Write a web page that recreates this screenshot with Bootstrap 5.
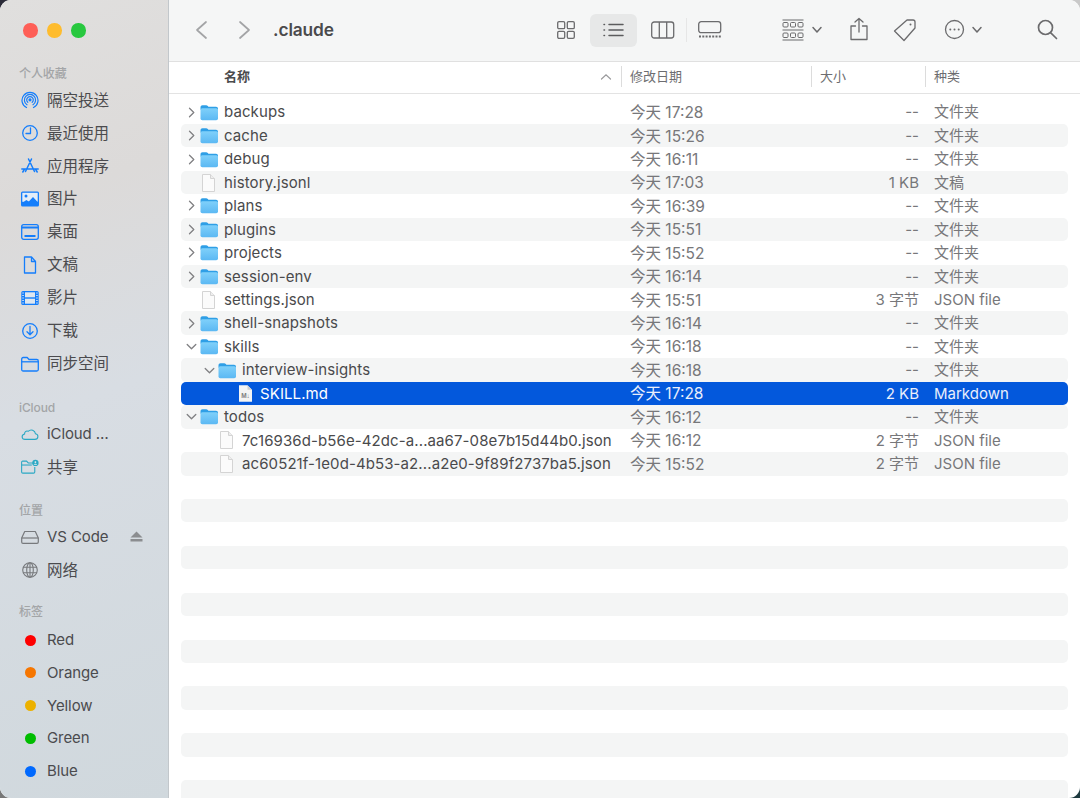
<!doctype html>
<html lang="zh"><head><meta charset="utf-8"><title>.claude</title>
<link rel="stylesheet" href="https://cdn.jsdelivr.net/npm/bootstrap@5.3.0/dist/css/bootstrap.min.css">
<style>
html,body{height:798px;overflow:hidden}
body{background:conic-gradient(#c9c9c9 0 25%,#1e3a40 0 50%,#777 0 75%,#2b2b38 0);font-family:Inter,"Noto Sans CJK SC",sans-serif;color:#3b3b3d;font-size:15px;letter-spacing:-.1px}
.win{width:1080px;height:798px;border-radius:11px;overflow:hidden;background:#fff}
.side{width:169px;height:798px;flex:none;background:linear-gradient(160deg,#e0dfde 0%,#dcdad9 25%,#d8dde3 50%,#d0d8dd 100%);border-right:1px solid #c2c7cb;padding-top:23px}
.lights{padding-left:23px;gap:9.5px;height:15px;margin-bottom:28px}
.lt{width:14.5px;height:14.5px;border-radius:50%}
.sec{font-size:12px;line-height:16px;font-weight:500;color:#a3a5a7;padding-left:19px;height:18px}
.sit{height:32.9px;padding-left:21px;gap:8px;color:#4b4b4e;white-space:nowrap}
.sit svg{width:18px;height:18px;flex:none}
.cj{font-size:15.5px;letter-spacing:0}
.tdot{width:11px;height:11px;border-radius:50%;margin:0 3px 0 4px;flex:none}
.s2{margin-top:20px}.s3{margin-top:19px}.s4{margin-top:17.500px;margin-bottom:1.500px}
.main{flex:1;min-width:0}
.tb{height:62px;background:#f5f6f6;border-bottom:1px solid #e0e0e0;position:relative}
.tic{position:absolute;top:0}
.ttl{position:absolute;left:104px;top:18px;font-size:17.3px;line-height:24px;font-weight:600;color:#4a4a4c;letter-spacing:-.1px}
.tsel{position:absolute;left:421px;top:14px;width:47px;height:33px;border-radius:6px;background:#e7e8e8}
.hd{height:32px;border-bottom:1px solid #e3e3e3;font-size:13px;letter-spacing:0;color:#6d6d70;position:relative}
.hc{position:absolute;top:0;line-height:28px}
.hs{position:absolute;top:4px;height:21px;width:1px;background:#dcdcdc}
.lst{padding:6.5px 12px 0 12px}
.rw{height:23.45px;border-radius:5px;font-size:15px;color:#4a4a4c;white-space:nowrap}
.rw:nth-child(even){background:#f4f5f5}
.rw.on{background:#0358dc;color:#fff}
.rw.on .dt,.rw.on .sz,.rw.on .kd{color:#e9eefb}
.nm{width:440px;flex:none;display:flex;align-items:center;padding-left:4px}
.l1{padding-left:22px}.l2{padding-left:55px}.l3{padding-left:27px}
.chev{width:13px;height:13px;flex:none;margin-right:2px}
.fo{width:19px;height:17px;flex:none;margin-right:5px}
.dc{width:17px;height:18px;flex:none;margin:0 7px 0 15px}
.l3 .dc{margin-left:10px}
.fn{display:block;letter-spacing:.1px;padding-top:1px}
.dt{width:190px;flex:none;padding:1px 0 0 9px;color:#77777a;font-size:15.5px;letter-spacing:0}
.sz{width:108px;flex:none;padding-top:1px;text-align:right;color:#77777a;font-size:15px;letter-spacing:0}
.kd{padding:1px 0 0 15px;color:#77777a;font-size:15px;letter-spacing:0}
</style></head><body>
<svg width="0" height="0" class="position-absolute">
<defs>
<linearGradient id="fg" x1="0" y1="0" x2="0" y2="1"><stop offset="0" stop-color="#7fd0fa"/><stop offset="1" stop-color="#5bb8f3"/></linearGradient>
<symbol id="folder" viewBox="0 0 19 17"><path d="M.5 3.200C.5 2 1.300 1.200 2.500 1.200h3.600c.8 0 1.200.3 1.700.9l.6.7H16c1.200 0 2 .8 2 2v1H.5z" fill="#2f9fe6"/><rect x=".5" y="4.300" width="17.500" height="12" rx="1.800" fill="url(#fg)"/></symbol>
<symbol id="doc" viewBox="0 0 17 18"><path d="M2.500 .5h8l4 4v13h-12z" fill="#fbfbfb" stroke="#d4d4d4"/><path d="M10.500 .5v4h4" fill="#eee" stroke="#d4d4d4"/></symbol>
<symbol id="cr" viewBox="0 0 13 13"><path d="M4.500 2.200L8.800 6.500 4.500 10.800" fill="none" stroke="#808083" stroke-width="1.300" stroke-linecap="round" stroke-linejoin="round"/></symbol>
<symbol id="cd" viewBox="0 0 13 13"><path d="M2.200 4.500l4.300 4.300 4.300-4.300" fill="none" stroke="#808083" stroke-width="1.300" stroke-linecap="round" stroke-linejoin="round"/></symbol>
<symbol id="mdoc" viewBox="0 0 19 17"><path d="M3 .3h8.500L16 4.800v12H3z" fill="#f4f4f4"/><path d="M11.500 .3v4.500H16" fill="#cfcfcf"/><text x="9.500" y="12.800" font-size="6.500" font-weight="700" text-anchor="middle" fill="#7f7f7f" font-family="Liberation Sans">M↓</text></symbol>
</defs></svg>
<div class="win d-flex">
<aside class="side">
<div class="lights d-flex"><div class="lt" style="background:#fe5f57"></div><div class="lt" style="background:#febc2e"></div><div class="lt" style="background:#28c83f"></div></div>
<div class="sec">个人收藏</div>
<div class="sit d-flex align-items-center"><svg viewBox="0 0 18 18" fill="none" stroke="#157efb" stroke-width="1.200" stroke-linecap="round"><path d="M5.500 16.500A8 8 0 1 1 12.500 16.500"/><path d="M6 13.800A5.600 5.600 0 1 1 12 13.800"/><path d="M6.800 11.300A3.300 3.300 0 1 1 11.200 11.300"/><circle cx="9" cy="8.800" r="1" fill="#157efb"/></svg><span class="cj">隔空投送</span></div>
<div class="sit d-flex align-items-center"><svg viewBox="0 0 18 18" fill="none" stroke="#157efb" stroke-width="1.300" stroke-linecap="round" stroke-linejoin="round"><circle cx="9" cy="9" r="7.300"/><path d="M9.500 4v5.500H5"/></svg><span class="cj">最近使用</span></div>
<div class="sit d-flex align-items-center"><svg viewBox="0 0 18 18" fill="none" stroke="#157efb" stroke-width="1.500" stroke-linecap="round"><path d="M10.500 2L4.500 14.500M7.500 2l6 12.500M.8 12h16.400M1.800 15l1.500-2.500M16.200 15l-1.500-2.500"/></svg><span class="cj">应用程序</span></div>
<div class="sit d-flex align-items-center"><svg viewBox="0 0 18 18"><rect x="0" y="1.500" width="18" height="15" rx="1.500" fill="#157efb"/><rect x="1.300" y="2.800" width="15.400" height="9" fill="#e3edf8"/><circle cx="5" cy="6" r="1.500" fill="#157efb"/><path d="M1.300 13l4-3 2.500 1.500L12 7l4.700 5v2H1.300z" fill="#157efb"/></svg><span class="cj">图片</span></div>
<div class="sit d-flex align-items-center"><svg viewBox="0 0 18 18" fill="none" stroke="#157efb" stroke-width="1.300"><rect x=".7" y="1.700" width="16.600" height="14.600" rx="2"/><path d="M.7 4.500h16.600" stroke-width="2"/><path d="M3.500 13h11" stroke-width="2"/></svg><span class="cj">桌面</span></div>
<div class="sit d-flex align-items-center"><svg viewBox="0 0 18 18" fill="none" stroke="#157efb" stroke-width="1.300" stroke-linejoin="round"><path d="M3.500 1h7l4 4.500V17h-11z"/><path d="M10.500 1v4.500h4"/></svg><span class="cj">文稿</span></div>
<div class="sit d-flex align-items-center"><svg viewBox="0 0 18 18"><rect x=".3" y="2" width="17.400" height="14" rx="1.500" fill="#157efb"/><rect x="4" y="3.300" width="10" height="5" fill="#dfe7ef"/><rect x="4" y="9.700" width="10" height="5" fill="#dfe7ef"/><path d="M1.300 4h1.500M1.300 6.500h1.500M1.300 9h1.500M1.300 11.500h1.500M1.300 14h1.500M15.200 4h1.500M15.200 6.500h1.500M15.200 9h1.500M15.200 11.500h1.500M15.200 14h1.500" stroke="#dfe7ef" stroke-width="1.200"/></svg><span class="cj">影片</span></div>
<div class="sit d-flex align-items-center"><svg viewBox="0 0 18 18" fill="none" stroke="#157efb" stroke-width="1.300" stroke-linecap="round" stroke-linejoin="round"><circle cx="9" cy="9" r="7.300"/><path d="M9 4.500v8M6 9.800l3 3 3-3"/></svg><span class="cj">下载</span></div>
<div class="sit d-flex align-items-center"><svg viewBox="0 0 18 18" fill="none" stroke="#157efb" stroke-width="1.300" stroke-linejoin="round"><path d="M.7 4c0-1 .6-1.500 1.500-1.500h4l1.800 2h7.800c1 0 1.500.6 1.500 1.500v8.500c0 1-.6 1.500-1.500 1.500H2.200c-1 0-1.500-.6-1.500-1.500z"/><path d="M.7 6.800h16.600"/></svg><span class="cj">同步空间</span></div>
<div class="sec s2">iCloud</div>
<div class="sit d-flex align-items-center"><svg viewBox="0 0 20 18" fill="none" stroke="#2aa8c4" stroke-width="1.200" stroke-linejoin="round"><path d="M4.500 15h11c4 0 4.500-5.500.6-6.200C15.600 5 11 3 8 6 5.500 5 3.800 7 4 9 0 10 .5 15 4.500 15z"/></svg><span>iCloud …</span></div>
<div class="sit d-flex align-items-center"><svg viewBox="0 0 20 18" fill="none" stroke="#2aa8c4" stroke-width="1.200" stroke-linejoin="round"><path d="M14 4.500H8l-1.800-2H2C1 2.500.7 3 .7 4v10.500c0 .8.500 1.300 1.300 1.300h12c.8 0 1.300-.5 1.300-1.300V9"/><path d="M.7 6.800H12"/><circle cx="16" cy="4.500" r="3.500" fill="#2aa8c4" stroke="none"/><circle cx="16" cy="3.500" r="1" fill="#e6ecef" stroke="none"/><path d="M14.200 6.500c.4-1.400 3.200-1.400 3.600 0z" fill="#e6ecef" stroke="none"/></svg><span class="cj">共享</span></div>
<div class="sec s3">位置</div>
<div class="sit d-flex align-items-center position-relative"><svg viewBox="0 0 18 18" fill="none" stroke="#77797c" stroke-width="1.200" stroke-linejoin="round"><path d="M.7 10l3-6.500h10.600l3 6.500v4c0 .8-.5 1.300-1.300 1.300H2c-.8 0-1.300-.5-1.300-1.300z"/><path d="M.7 10h16.600"/></svg><span>VS Code</span><svg class="position-absolute" style="left:130px;top:9px;width:13px;height:13px" viewBox="0 0 13 13"><path d="M6.500 1.500l6 6H.5z" fill="#8b8d90"/><rect x=".5" y="9" width="12" height="2.500" fill="#8b8d90"/></svg></div>
<div class="sit d-flex align-items-center"><svg viewBox="0 0 18 18" fill="none" stroke="#77797c" stroke-width="1.100"><circle cx="9" cy="9" r="7.300"/><ellipse cx="9" cy="9" rx="3.300" ry="7.300"/><path d="M2 6.300h14M2 11.700h14M9 1.700v14.600"/></svg><span class="cj">网络</span></div>
<div class="sec s4">标签</div>
<div class="sit d-flex align-items-center"><div class="tdot" style="background:#fe0000"></div><span>Red</span></div>
<div class="sit d-flex align-items-center"><div class="tdot" style="background:#f67600"></div><span>Orange</span></div>
<div class="sit d-flex align-items-center"><div class="tdot" style="background:#ecb100"></div><span>Yellow</span></div>
<div class="sit d-flex align-items-center"><div class="tdot" style="background:#00bd00"></div><span>Green</span></div>
<div class="sit d-flex align-items-center"><div class="tdot" style="background:#0069fe"></div><span>Blue</span></div>
</aside>
<main class="main">
<div class="tb">
<svg class="tic" style="left:24px;top:20px" width="18" height="20" viewBox="0 0 18 20"><path d="M13 2L4 10l9 8" fill="none" stroke="#a3a4a6" stroke-width="1.700" stroke-linecap="round" stroke-linejoin="round"/></svg>
<svg class="tic" style="left:66px;top:20px" width="18" height="20" viewBox="0 0 18 20"><path d="M5 2l9 8-9 8" fill="none" stroke="#a3a4a6" stroke-width="1.700" stroke-linecap="round" stroke-linejoin="round"/></svg>
<div class="ttl">.claude</div>
<svg class="tic" style="left:388px;top:21px" width="18" height="18" viewBox="0 0 18 18" fill="none" stroke="#6b6b6d" stroke-width="1.300"><rect x=".7" y=".7" width="7" height="7" rx="1.300"/><rect x="10.300" y=".7" width="7" height="7" rx="1.300"/><rect x=".7" y="10.300" width="7" height="7" rx="1.300"/><rect x="10.300" y="10.300" width="7" height="7" rx="1.300"/></svg>
<div class="tsel"></div>
<svg class="tic" style="left:434px;top:22px" width="21" height="16" viewBox="0 0 21 16" fill="none" stroke="#5b5b5d" stroke-width="1.500" stroke-linecap="round"><path d="M6 2.500h14M6 8h14M6 13.500h14M1 2.500h.5M1 8h.5M1 13.500h.5"/></svg>
<svg class="tic" style="left:482px;top:21px" width="24" height="18" viewBox="0 0 24 18" fill="none" stroke="#6b6b6d" stroke-width="1.300"><rect x=".7" y="1" width="22" height="16" rx="2.500"/><path d="M8.300 1v16M15.700 1v16"/></svg>
<div class="position-absolute" style="left:517px;top:18px;width:1px;height:24px;background:#e6e6e6"></div>
<svg class="tic" style="left:529px;top:21px" width="24" height="18" viewBox="0 0 24 18" fill="none" stroke="#6b6b6d" stroke-width="1.300"><rect x=".7" y=".7" width="22" height="11" rx="2.500"/><path d="M1 15.500h22" stroke-width="2" stroke-dasharray="2 1.300"/></svg>
<svg class="tic" style="left:613px;top:19px" width="22" height="22" viewBox="0 0 22 22" fill="none" stroke="#6b6b6d"><path d="M.5 1h21M.5 21h21M.5 11h21" stroke-width="1.200"/><rect x="1" y="3.500" width="5" height="4.500" rx="1"/><rect x="8.500" y="3.500" width="5" height="4.500" rx="1"/><rect x="16" y="3.500" width="5" height="4.500" rx="1"/><rect x="1" y="14" width="5" height="4.500" rx="1"/><rect x="8.500" y="14" width="5" height="4.500" rx="1"/><rect x="16" y="14" width="5" height="4.500" rx="1"/></svg>
<svg class="tic" style="left:642px;top:25px" width="12" height="10" viewBox="0 0 12 10"><path d="M2 2.500L6 7l4-4.500" fill="none" stroke="#6b6b6d" stroke-width="1.500" stroke-linecap="round" stroke-linejoin="round"/></svg>
<svg class="tic" style="left:681px;top:17px" width="18" height="24" viewBox="0 0 18 24" fill="none" stroke="#6b6b6d" stroke-width="1.300" stroke-linecap="round" stroke-linejoin="round"><path d="M5.500 9H1v13.500h16V9h-4.500M9 15V1.500M5 5l4-3.500L13 5"/></svg>
<svg class="tic" style="left:724px;top:18px" width="24" height="24" viewBox="0 0 24 24" fill="none" stroke="#6b6b6d" stroke-width="1.300" stroke-linejoin="round"><path d="M14 2h6c1.200 0 2 .8 2 2v6L11 22.500 1.500 13z"/><circle cx="17.500" cy="6.500" r="1" fill="#6b6b6d" stroke="none"/></svg>
<svg class="tic" style="left:775px;top:19px" width="21" height="21" viewBox="0 0 21 21" fill="none" stroke="#6b6b6d" stroke-width="1.300"><circle cx="10.500" cy="10.500" r="9"/><circle cx="6.300" cy="10.500" r="1" fill="#6b6b6d" stroke="none"/><circle cx="10.500" cy="10.500" r="1" fill="#6b6b6d" stroke="none"/><circle cx="14.700" cy="10.500" r="1" fill="#6b6b6d" stroke="none"/></svg>
<svg class="tic" style="left:802px;top:25px" width="12" height="10" viewBox="0 0 12 10"><path d="M2 2.500L6 7l4-4.500" fill="none" stroke="#6b6b6d" stroke-width="1.500" stroke-linecap="round" stroke-linejoin="round"/></svg>
<svg class="tic" style="left:868px;top:19px" width="21" height="21" viewBox="0 0 21 21" fill="none" stroke="#6b6b6d" stroke-width="1.700" stroke-linecap="round"><circle cx="8.500" cy="8.500" r="7"/><path d="M13.800 13.800l5.700 5.700"/></svg>
</div>
<div class="hd">
<div class="hc fw-semibold" style="left:55px;color:#4a4a4c">名称</div>
<svg class="tic" style="left:431px;top:11px" width="12" height="8" viewBox="0 0 12 8"><path d="M1.500 6L6 1.800 10.500 6" fill="none" stroke="#9a9a9c" stroke-width="1.200" stroke-linecap="round"/></svg>
<div class="hs" style="left:452px"></div>
<div class="hc" style="left:461px">修改日期</div>
<div class="hs" style="left:642px"></div>
<div class="hc" style="left:651px">大小</div>
<div class="hs" style="left:756px"></div>
<div class="hc" style="left:765px">种类</div>
</div>
<div class="lst">
<div class="rw d-flex align-items-center"><div class="nm"><svg class="chev"><use href="#cr"/></svg><svg class="fo"><use href="#folder"/></svg><span class="fn">backups</span></div><div class="dt">今天 17:28</div><div class="sz">--</div><div class="kd cj">文件夹</div></div>
<div class="rw d-flex align-items-center"><div class="nm"><svg class="chev"><use href="#cr"/></svg><svg class="fo"><use href="#folder"/></svg><span class="fn">cache</span></div><div class="dt">今天 15:26</div><div class="sz">--</div><div class="kd cj">文件夹</div></div>
<div class="rw d-flex align-items-center"><div class="nm"><svg class="chev"><use href="#cr"/></svg><svg class="fo"><use href="#folder"/></svg><span class="fn">debug</span></div><div class="dt">今天 16:11</div><div class="sz">--</div><div class="kd cj">文件夹</div></div>
<div class="rw d-flex align-items-center"><div class="nm"><svg class="dc"><use href="#doc"/></svg><span class="fn">history.jsonl</span></div><div class="dt">今天 17:03</div><div class="sz">1 KB</div><div class="kd cj">文稿</div></div>
<div class="rw d-flex align-items-center"><div class="nm"><svg class="chev"><use href="#cr"/></svg><svg class="fo"><use href="#folder"/></svg><span class="fn">plans</span></div><div class="dt">今天 16:39</div><div class="sz">--</div><div class="kd cj">文件夹</div></div>
<div class="rw d-flex align-items-center"><div class="nm"><svg class="chev"><use href="#cr"/></svg><svg class="fo"><use href="#folder"/></svg><span class="fn">plugins</span></div><div class="dt">今天 15:51</div><div class="sz">--</div><div class="kd cj">文件夹</div></div>
<div class="rw d-flex align-items-center"><div class="nm"><svg class="chev"><use href="#cr"/></svg><svg class="fo"><use href="#folder"/></svg><span class="fn">projects</span></div><div class="dt">今天 15:52</div><div class="sz">--</div><div class="kd cj">文件夹</div></div>
<div class="rw d-flex align-items-center"><div class="nm"><svg class="chev"><use href="#cr"/></svg><svg class="fo"><use href="#folder"/></svg><span class="fn">session-env</span></div><div class="dt">今天 16:14</div><div class="sz">--</div><div class="kd cj">文件夹</div></div>
<div class="rw d-flex align-items-center"><div class="nm"><svg class="dc"><use href="#doc"/></svg><span class="fn">settings.json</span></div><div class="dt">今天 15:51</div><div class="sz cj">3 字节</div><div class="kd">JSON file</div></div>
<div class="rw d-flex align-items-center"><div class="nm"><svg class="chev"><use href="#cr"/></svg><svg class="fo"><use href="#folder"/></svg><span class="fn">shell-snapshots</span></div><div class="dt">今天 16:14</div><div class="sz">--</div><div class="kd cj">文件夹</div></div>
<div class="rw d-flex align-items-center"><div class="nm"><svg class="chev"><use href="#cd"/></svg><svg class="fo"><use href="#folder"/></svg><span class="fn">skills</span></div><div class="dt">今天 16:18</div><div class="sz">--</div><div class="kd cj">文件夹</div></div>
<div class="rw d-flex align-items-center"><div class="nm l1"><svg class="chev"><use href="#cd"/></svg><svg class="fo"><use href="#folder"/></svg><span class="fn">interview-insights</span></div><div class="dt">今天 16:18</div><div class="sz">--</div><div class="kd cj">文件夹</div></div>
<div class="rw on d-flex align-items-center"><div class="nm l2"><svg class="fo"><use href="#mdoc"/></svg><span class="fn">SKILL.md</span></div><div class="dt">今天 17:28</div><div class="sz">2 KB</div><div class="kd">Markdown</div></div>
<div class="rw d-flex align-items-center"><div class="nm"><svg class="chev"><use href="#cd"/></svg><svg class="fo"><use href="#folder"/></svg><span class="fn">todos</span></div><div class="dt">今天 16:12</div><div class="sz">--</div><div class="kd cj">文件夹</div></div>
<div class="rw d-flex align-items-center"><div class="nm l3"><svg class="dc"><use href="#doc"/></svg><span class="fn">7c16936d-b56e-42dc-a...aa67-08e7b15d44b0.json</span></div><div class="dt">今天 16:12</div><div class="sz cj">2 字节</div><div class="kd">JSON file</div></div>
<div class="rw d-flex align-items-center"><div class="nm l3"><svg class="dc"><use href="#doc"/></svg><span class="fn">ac60521f-1e0d-4b53-a2...a2e0-9f89f2737ba5.json</span></div><div class="dt">今天 15:52</div><div class="sz cj">2 字节</div><div class="kd">JSON file</div></div>
<div class="rw"></div><div class="rw"></div><div class="rw"></div><div class="rw"></div><div class="rw"></div><div class="rw"></div><div class="rw"></div><div class="rw"></div><div class="rw"></div><div class="rw"></div><div class="rw"></div><div class="rw"></div><div class="rw"></div><div class="rw"></div>
</div>
</main>
</div>
</body></html>
